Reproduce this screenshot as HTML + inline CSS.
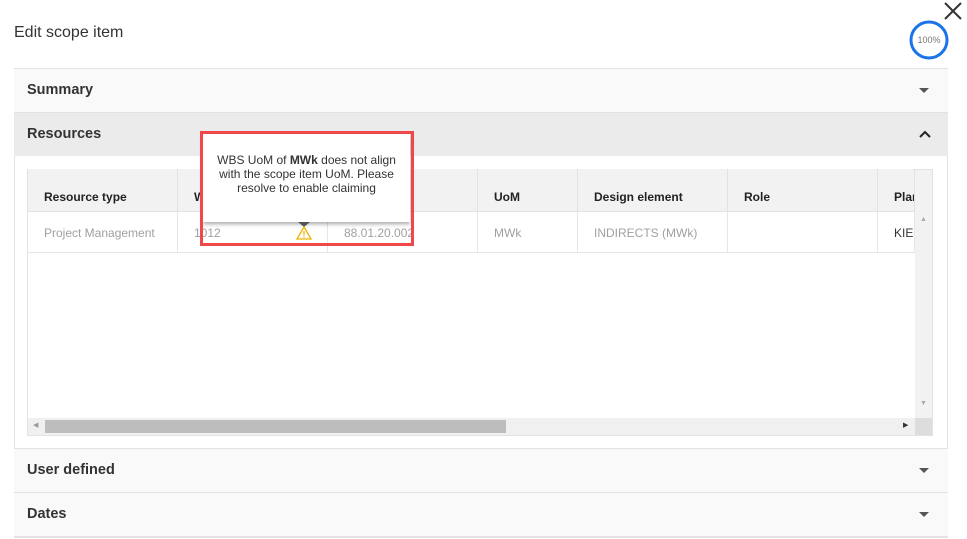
<!DOCTYPE html>
<html><head><style>
*{margin:0;padding:0;box-sizing:border-box}
body{width:967px;height:539px;background:#fff;font-family:"Liberation Sans",sans-serif;position:relative;overflow:hidden}
.abs{position:absolute}
.hdr{position:absolute;left:14px;width:934px;height:44px;background:#f9f9f9;border-top:1px solid #e2e2e2;font-size:14.5px;font-weight:bold;color:#333;padding:13px 0 0 13px}
.arr{position:absolute;right:19px;top:19px;width:0;height:0;border-left:5px solid transparent;border-right:5px solid transparent;border-top:5px solid #555}
.th{position:absolute;top:169px;height:43px;font-size:12px;font-weight:bold;color:#222;padding:21px 0 0 16px;border-right:1px solid #e2e2e2;background:#f2f2f2;border-bottom:1px solid #e2e2e2}
.td{position:absolute;top:212px;height:41px;font-size:12px;color:#a0a0a0;padding:14px 0 0 16px;border-right:1px solid #e6e6e6;border-bottom:1px solid #e6e6e6}
</style></head><body>
<div class="abs" style="left:14px;top:24px;font-size:16px;color:#333">Edit scope item</div>
<svg class="abs" style="left:943px;top:1px" width="20" height="20"><path d="M2 2L18 18M18 2L2 18" stroke="#333" stroke-width="2"/></svg>
<svg class="abs" style="left:909px;top:20px" width="40" height="40"><circle cx="20" cy="20" r="18" fill="none" stroke="#1a73e8" stroke-width="3"/><text x="20" y="23" font-size="9" text-anchor="middle" fill="#777" font-family="Liberation Sans">100%</text></svg>
<div class="abs" style="left:14px;top:68px;width:934px;height:470px;border:1px solid #e2e2e2;border-top:none"></div>
<div class="hdr" style="top:68px">Summary<div class="arr"></div></div>
<div class="hdr" style="top:112px;background:#ebebeb">Resources<svg class="abs" style="right:17px;top:17px" width="12" height="8"><path d="M1 7L6 2L11 7" stroke="#222" stroke-width="2" fill="none"/></svg></div>
<div class="abs" style="left:27px;top:169px;width:906px;height:267px;border:1px solid #e2e2e2;background:#fff"></div>
<div class="th" style="left:28px;width:150px">Resource type</div>
<div class="th" style="left:178px;width:150px">W</div>
<div class="th" style="left:328px;width:150px">e</div>
<div class="th" style="left:478px;width:100px">UoM</div>
<div class="th" style="left:578px;width:150px">Design element</div>
<div class="th" style="left:728px;width:150px">Role</div>
<div class="th" style="left:878px;width:37px;overflow:hidden;white-space:nowrap">Plan</div>
<div class="abs" style="left:915px;top:170px;width:17px;height:42px;background:#f2f2f2"></div>
<div class="td" style="left:28px;width:150px">Project Management</div>
<div class="td" style="left:178px;width:150px">1012</div>
<div class="td" style="left:328px;width:150px">88.01.20.002</div>
<div class="td" style="left:478px;width:100px">MWk</div>
<div class="td" style="left:578px;width:150px">INDIRECTS (MWk)</div>
<div class="td" style="left:728px;width:150px"></div>
<div class="td" style="left:878px;width:37px;color:#333;overflow:hidden">KIE</div>
<div class="abs" style="left:915px;top:212px;width:17px;height:206px;background:#f2f2f2;font-size:7px;color:#aaa;text-align:center"><div style="margin-top:4px">▲</div><div style="margin-top:177px">▼</div></div>
<div class="abs" style="left:28px;top:418px;width:904px;height:17px;background:#f0f0f0"></div>
<div class="abs" style="left:45px;top:420px;width:461px;height:13px;background:#bdbdbd"></div>
<div class="abs" style="left:33px;top:421px;font-size:7px;color:#999">◀</div>
<div class="abs" style="left:903px;top:421px;font-size:7px;color:#333">▶</div>
<div class="abs" style="left:915px;top:418px;width:17px;height:17px;background:#ddd"></div>
<div class="hdr" style="top:448px">User defined<div class="arr"></div></div>
<div class="hdr" style="top:492px">Dates<div class="arr"></div></div>
<div class="abs" style="left:14px;top:536px;width:934px;height:2px;background:#e2e2e2"></div>
<!-- tooltip -->
<div class="abs" style="left:203px;top:134px;width:207px;height:88px;background:#fff;box-shadow:0 2px 4px rgba(0,0,0,.35);font-size:12px;color:#333;text-align:center;line-height:14px;padding-top:19px">WBS UoM of <b>MWk</b> does not align<br>with the scope item UoM. Please<br>resolve to enable claiming</div>
<div class="abs" style="left:298px;top:222px;width:0;height:0;border-left:6px solid transparent;border-right:6px solid transparent;border-top:5px solid #555"></div>
<svg class="abs" style="left:296px;top:226px" width="16" height="14"><path d="M8 1L15 13H1Z" fill="#fff" stroke="#f0b400" stroke-width="1.3"/><path d="M8 5V9.5M8 10.8V12" stroke="#f0b400" stroke-width="1.3"/></svg>
<div class="abs" style="left:200px;top:131px;width:214px;height:115px;border:3px solid #f04848"></div>
</body></html>
